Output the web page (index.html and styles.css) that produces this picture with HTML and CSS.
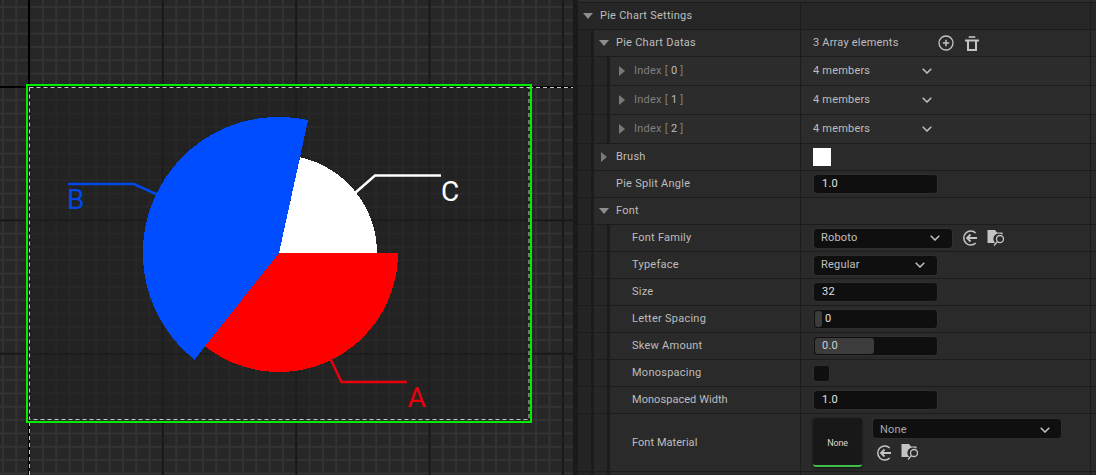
FILE: index.html
```html
<!DOCTYPE html>
<html lang="en">
<head>
    <meta charset="UTF-8">
    <title>Pie Chart Settings</title>
    <link rel="stylesheet" href="styles.css">
</head>
<body>
    <div class="editor">
        <div class="canvas">
            <div class="widget-shade"></div>
            <svg class="chart" width="573" height="475" viewBox="0 0 573 475">
                <line class="guide" x1="29.5" y1="422" x2="29.5" y2="475"/>
                <line class="guide" x1="529" y1="87.5" x2="573" y2="87.5"/>
                <polyline class="leader" stroke="#0048e8" points="68,184 134,184 157,194.5"/>
                <polyline class="leader" stroke="#ffffff" points="355,193 375,175.5 441,175.5"/>
                <polyline class="leader" stroke="#e8000c" points="330,358 341.5,382 407,382"/>
                <path class="slice" fill="#ffffff" d="M279 253 L300 157.3 A98 98 0 0 1 377 253 Z"/>
                <path class="slice" fill="#ff0000" d="M279 253 H398 A119 119 0 0 1 204 345.4 Z"/>
                <path class="slice" fill="#004dff" d="M279 253 L308.1 120.1 A136 136 0 0 0 194.5 359.6 Z"/>
                <text class="label" fill="#0048e8" x="67" y="209">B</text>
                <text class="label" fill="#ffffff" x="441" y="201">C</text>
                <text class="label" fill="#e8000c" x="407.500" y="407">A</text>
                <rect class="guide" x="29.5" y="87.5" width="499.500" height="332"/>
                <rect class="frame" x="27" y="85" width="504" height="337"/>
            </svg>
        </div>
        <div class="panel">
            <div class="row-top"></div>

            <div class="row row-head">
                <div class="name">
                    <svg class="tri" width="10" height="6"><polygon points="0,0 10,0 5,6"/></svg>
                    <span>Pie Chart Settings</span>
                </div>
                <div class="value"></div>
                <div class="end"></div>
            </div>

            <div class="row">
                <div class="name">
                    <div class="gutter"></div>
                    <svg class="tri" width="10" height="6"><polygon points="0,0 10,0 5,6"/></svg>
                    <span>Pie Chart Datas</span>
                </div>
                <div class="value">
                    <span class="count">3 Array elements</span>
                    <svg class="icon icon-add" width="16" height="16" viewBox="0 0 16 16">
                        <circle cx="8" cy="8" r="7" fill="none" stroke="#c4c4c4" stroke-width="1.300"/>
                        <path d="M8 4.800V11.200M4.800 8H11.200" stroke="#c4c4c4" stroke-width="1.500"/>
                    </svg>
                    <svg class="icon icon-trash" width="14" height="15" viewBox="0 0 14 15">
                        <path d="M0 4.500H14" stroke="#c4c4c4" stroke-width="2"/>
                        <path d="M3.700 1H10.300" stroke="#c4c4c4" stroke-width="1.600"/>
                        <path d="M3 5V14H11V5" fill="none" stroke="#c4c4c4" stroke-width="2"/>
                    </svg>
                </div>
                <div class="end"></div>
            </div>

            <div class="row row-tall">
                <div class="name">
                    <div class="gutter"></div>
                    <div class="gutter"></div>
                    <svg class="arrow" width="6" height="10"><polygon points="0,0 6,5 0,10"/></svg>
                    <span class="dim">Index [ <b>0</b> ]</span>
                </div>
                <div class="value">
                    <span class="members">4 members</span>
                    <svg class="chev" width="10" height="6" viewBox="0 0 10 6"><path d="M0.700 0.700L5 5L9.300 0.700"/></svg>
                </div>
                <div class="end"></div>
            </div>

            <div class="row row-tall">
                <div class="name">
                    <div class="gutter"></div>
                    <div class="gutter"></div>
                    <svg class="arrow" width="6" height="10"><polygon points="0,0 6,5 0,10"/></svg>
                    <span class="dim">Index [ <b>1</b> ]</span>
                </div>
                <div class="value">
                    <span class="members">4 members</span>
                    <svg class="chev" width="10" height="6" viewBox="0 0 10 6"><path d="M0.700 0.700L5 5L9.300 0.700"/></svg>
                </div>
                <div class="end"></div>
            </div>

            <div class="row row-tall">
                <div class="name">
                    <div class="gutter"></div>
                    <div class="gutter"></div>
                    <svg class="arrow" width="6" height="10"><polygon points="0,0 6,5 0,10"/></svg>
                    <span class="dim">Index [ <b>2</b> ]</span>
                </div>
                <div class="value">
                    <span class="members">4 members</span>
                    <svg class="chev" width="10" height="6" viewBox="0 0 10 6"><path d="M0.700 0.700L5 5L9.300 0.700"/></svg>
                </div>
                <div class="end"></div>
            </div>

            <div class="row">
                <div class="name">
                    <div class="gutter"></div>
                    <svg class="arrow arrow-brush" width="6" height="10"><polygon points="0,0 6,5 0,10"/></svg>
                    <span>Brush</span>
                </div>
                <div class="value"><div class="swatch"></div></div>
                <div class="end"></div>
            </div>

            <div class="row">
                <div class="name">
                    <div class="gutter"></div>
                    <span class="no-arrow">Pie Split Angle</span>
                </div>
                <div class="value"><div class="field">1.0</div></div>
                <div class="end"></div>
            </div>

            <div class="row">
                <div class="name">
                    <div class="gutter"></div>
                    <svg class="tri" width="10" height="6"><polygon points="0,0 10,0 5,6"/></svg>
                    <span>Font</span>
                </div>
                <div class="value"></div>
                <div class="end"></div>
            </div>

            <div class="row">
                <div class="name">
                    <div class="gutter"></div>
                    <div class="gutter"></div>
                    <span class="no-arrow">Font Family</span>
                </div>
                <div class="value">
                    <div class="select select-wide">
                        <span>Roboto</span>
                        <svg class="chev" width="10" height="6" viewBox="0 0 10 6"><path d="M0.700 0.700L5 5L9.300 0.700"/></svg>
                    </div>
                    <svg class="icon icon-back" width="16" height="16" viewBox="0 0 16 16">
                        <path d="M13.700 3A7 7 0 1 0 13.700 13" fill="none" stroke="#c4c4c4" stroke-width="1.500"/>
                        <path d="M15 8H5M8.500 4.500L5 8L8.500 11.500" fill="none" stroke="#c4c4c4" stroke-width="1.800"/>
                    </svg>
                    <svg class="icon icon-browse" width="17" height="17" viewBox="0 0 17 17">
                        <path d="M0.500 0H8L10 2.500H15.500V4.800A5 5 0 0 0 8.200 13H0.500Z" fill="#c4c4c4"/>
                        <circle cx="13" cy="9" r="3.500" fill="none" stroke="#c4c4c4" stroke-width="1.300"/>
                        <path d="M10.500 11.500L7 15.500" stroke="#c4c4c4" stroke-width="1.300"/>
                    </svg>
                </div>
                <div class="end"></div>
            </div>

            <div class="row">
                <div class="name">
                    <div class="gutter"></div>
                    <div class="gutter"></div>
                    <span class="no-arrow">Typeface</span>
                </div>
                <div class="value">
                    <div class="select">
                        <span>Regular</span>
                        <svg class="chev" width="10" height="6" viewBox="0 0 10 6"><path d="M0.700 0.700L5 5L9.300 0.700"/></svg>
                    </div>
                </div>
                <div class="end"></div>
            </div>

            <div class="row">
                <div class="name">
                    <div class="gutter"></div>
                    <div class="gutter"></div>
                    <span class="no-arrow">Size</span>
                </div>
                <div class="value"><div class="field">32</div></div>
                <div class="end"></div>
            </div>

            <div class="row">
                <div class="name">
                    <div class="gutter"></div>
                    <div class="gutter"></div>
                    <span class="no-arrow">Letter Spacing</span>
                </div>
                <div class="value">
                    <div class="field field-slider"><div class="handle"></div><span>0</span></div>
                </div>
                <div class="end"></div>
            </div>

            <div class="row">
                <div class="name">
                    <div class="gutter"></div>
                    <div class="gutter"></div>
                    <span class="no-arrow">Skew Amount</span>
                </div>
                <div class="value">
                    <div class="field field-skew"><div class="fill">0.0</div></div>
                </div>
                <div class="end"></div>
            </div>

            <div class="row">
                <div class="name">
                    <div class="gutter"></div>
                    <div class="gutter"></div>
                    <span class="no-arrow">Monospacing</span>
                </div>
                <div class="value"><div class="check"></div></div>
                <div class="end"></div>
            </div>

            <div class="row">
                <div class="name">
                    <div class="gutter"></div>
                    <div class="gutter"></div>
                    <span class="no-arrow tight">Monospaced Width</span>
                </div>
                <div class="value"><div class="field">1.0</div></div>
                <div class="end"></div>
            </div>

            <div class="row row-material">
                <div class="name">
                    <div class="gutter"></div>
                    <div class="gutter"></div>
                    <span class="no-arrow tight">Font Material</span>
                </div>
                <div class="value value-material">
                    <div class="thumb">None</div>
                    <div class="asset">
                        <div class="select select-asset">
                            <span>None</span>
                            <svg class="chev" width="10" height="6" viewBox="0 0 10 6"><path d="M0.700 0.700L5 5L9.300 0.700"/></svg>
                        </div>
                        <div class="asset-tools">
                            <svg class="icon" width="16" height="16" viewBox="0 0 16 16">
                                <path d="M13.700 3A7 7 0 1 0 13.700 13" fill="none" stroke="#c4c4c4" stroke-width="1.500"/>
                                <path d="M15 8H5M8.500 4.500L5 8L8.500 11.500" fill="none" stroke="#c4c4c4" stroke-width="1.800"/>
                            </svg>
                            <svg class="icon icon-browse" width="17" height="17" viewBox="0 0 17 17">
                                <path d="M0.500 0H8L10 2.500H15.500V4.800A5 5 0 0 0 8.200 13H0.500Z" fill="#c4c4c4"/>
                                <circle cx="13" cy="9" r="3.500" fill="none" stroke="#c4c4c4" stroke-width="1.300"/>
                                <path d="M10.500 11.500L7 15.500" stroke="#c4c4c4" stroke-width="1.300"/>
                            </svg>
                        </div>
                    </div>
                </div>
                <div class="end"></div>
            </div>

            <div class="row row-last">
                <div class="name">
                    <div class="gutter"></div>
                    <div class="gutter"></div>
                </div>
                <div class="value"></div>
                <div class="end"></div>
            </div>
        </div>
    </div>
</body>
</html>
```

FILE: styles.css
```css
html, body {
    margin: 0;
    padding: 0;
    height: 100%;
    overflow: hidden;
    background-color: #1a1a1a;
}

.editor {
    display: flex;
    height: 475px;
    font-family: Roboto, sans-serif;
    font-size: 11px;
    color: #bdbdbd;
}

/* viewport on the left */
.canvas {
    position: relative;
    flex: none;
    width: 573px;
    height: 475px;
    margin-right: 5px;
    background-color: #272727;
    background-image:
        linear-gradient(#000, #000),
        linear-gradient(#000, #000),
        linear-gradient(90deg, #171717 2px, transparent 2px),
        linear-gradient(#171717 2px, transparent 2px),
        linear-gradient(90deg, #333 2px, transparent 2px),
        linear-gradient(#333 2px, transparent 2px);
    background-size:
        2px 100%,
        100% 2px,
        133.33px 100%,
        100% 133.33px,
        13.333px 100%,
        100% 13.333px;
    background-position:
        28px 0,
        0 86px,
        28.500px 0,
        0 86px,
        2px 0,
        0 6px;
    background-repeat: no-repeat, no-repeat, repeat, repeat, repeat, repeat;
}

.widget-shade {
    position: absolute;
    left: 27px;
    top: 85px;
    width: 504px;
    height: 337px;
    background-color: rgba(32, 32, 32, 0.62);
}

.chart {
    position: absolute;
    left: 0;
    top: 0;
}

.frame {
    fill: none;
    stroke: #00ee00;
    stroke-width: 2;
}

.guide {
    fill: none;
    stroke: #c8c8c8;
    stroke-width: 1;
    stroke-dasharray: 4 3;
}

.leader {
    fill: none;
    stroke-width: 2.500;
}

.slice {
    shape-rendering: crispEdges;
}

.label {
    font-family: Roboto, sans-serif;
    font-size: 28px;
    font-weight: 400;
}

/* details panel */
.panel {
    flex: 1;
    display: flex;
    flex-direction: column;
    background-color: #2a2a2a;
}

.row-top {
    height: 2px;
    background-color: #2c2c2c;
    border-bottom: 1px solid #1c1c1c;
}

.row {
    display: flex;
    height: 26px;
    border-bottom: 1px solid #1c1c1c;
    background-color: #2a2a2a;
}

.row-head {
    background-color: #262626;
}

.row-tall {
    height: 28px;
    background-color: #2c2c2c;
}

.row-material {
    height: 57px;
}

.row-last {
    flex: 1;
    border-bottom: none;
}

.name {
    display: flex;
    align-items: center;
    flex: none;
    width: 222px;
    box-sizing: border-box;
    letter-spacing: 0.25px;
}

/* Roboto sits a pixel high in the reference rows */
.name span,
.count,
.members,
.select span {
    padding-bottom: 2px;
}

.row-material .name span,
.select-asset span {
    padding-bottom: 0;
}

.tight {
    letter-spacing: 0.05px;
}

.gutter {
    flex: none;
    align-self: stretch;
    width: 13px;
    height: 100%;
    background-color: #242424;
    border-right: 3px solid #1c1c1c;
    margin-bottom: -1px;
}

.gutter + .gutter {
    background-color: #272727;
}

.tri {
    flex: none;
    margin: 0 7px 0 5px;
    fill: #8e8e8e;
}

.arrow {
    flex: none;
    margin: 0 9px;
    fill: #7a7a7a;
}

.arrow-brush {
    margin: 0 9px 0 7px;
}

.no-arrow {
    margin-left: 22px;
}

.dim {
    color: #7f7f7f;
}

.dim b {
    font-weight: 400;
    color: #bcbcbc;
}

.value {
    display: flex;
    align-items: center;
    flex: none;
    width: 290px;
    box-sizing: border-box;
    padding-left: 12px;
    border-left: 1px solid #1c1c1c;
    letter-spacing: 0.2px;
}

.end {
    flex: 1;
    border-left: 1px solid #1c1c1c;
}

.count {
    width: 125px;
}

.members {
    width: 109px;
}

.icon {
    flex: none;
    margin-right: 10px;
}

.icon-add {
    margin-right: 11px;
}

.icon-trash {
    margin-right: 0;
}

.icon-back {
    margin-left: 9px;
}

.icon-browse {
    margin-left: -1px;
}

.chev {
    flex: none;
    fill: none;
    stroke: #c0c0c0;
    stroke-width: 1.500;
}

.swatch {
    width: 18px;
    height: 18px;
    background-color: #fff;
}

.field,
.select {
    display: flex;
    align-items: center;
    box-sizing: border-box;
    width: 125px;
    height: 20px;
    padding: 0 0 2px 8px;
    background-color: #0f0f0f;
    border: 1px solid #2f2f2f;
    border-radius: 4px;
    color: #e0e0e0;
}

.select {
    justify-content: space-between;
    height: 21px;
    padding: 0 12px 0 7px;
    color: #c0c0c0;
}

.select-wide {
    width: 140px;
}

.select-asset {
    width: 190px;
    padding-top: 2px;
    padding-right: 11px;
    color: #a8a8a8;
}

.field-slider {
    position: relative;
    padding-left: 11px;
}

.handle {
    position: absolute;
    left: 1px;
    top: 1px;
    bottom: 1px;
    width: 7px;
    background-color: #3c3c3c;
    border-radius: 3px;
}

.field-skew {
    padding: 1px;
}

.fill {
    display: flex;
    align-items: center;
    width: 59px;
    height: 100%;
    box-sizing: border-box;
    padding: 0 0 2px 7px;
    background-color: #3c3c3c;
    border-radius: 3px;
    color: #d0d0d0;
}

.check {
    width: 17px;
    height: 17px;
    box-sizing: border-box;
    background-color: #0f0f0f;
    border: 1px solid #2f2f2f;
    border-radius: 3px;
}

.value-material {
    align-items: flex-start;
    padding-top: 4px;
}

.thumb {
    display: flex;
    align-items: center;
    justify-content: center;
    flex: none;
    width: 49px;
    height: 49px;
    box-sizing: border-box;
    margin-right: 10px;
    padding-top: 3px;
    background-color: #181818;
    border-bottom: 2px solid #3cc04a;
    border-radius: 3px;
    box-shadow: 0 1px 3px #111;
    font-size: 9px;
    letter-spacing: -0.2px;
    color: #d8d8d8;
}

.asset {
    display: flex;
    flex-direction: column;
}

.asset-tools {
    display: flex;
    align-items: center;
    margin: 5px 0 0 4px;
}
```
